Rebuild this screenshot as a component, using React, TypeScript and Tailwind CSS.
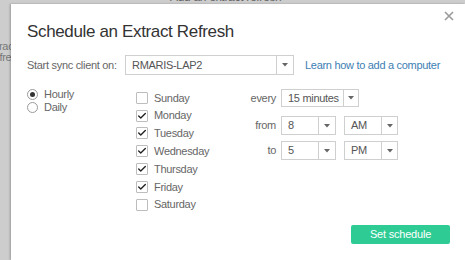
import { Check } from "lucide-react";

const days = [
  { name: "Sunday", on: false },
  { name: "Monday", on: true },
  { name: "Tuesday", on: true },
  { name: "Wednesday", on: true },
  { name: "Thursday", on: true },
  { name: "Friday", on: true },
  { name: "Saturday", on: false },
];

function Caret() {
  return (
    <svg width="6" height="4" viewBox="0 0 6 4">
      <path d="M0 0 L6 0 L3 3.5 Z" fill="#666" />
    </svg>
  );
}

function Select({ value, width, arrow = 16, height = 19 }: { value: string; width: number; arrow?: number; height?: number }) {
  return (
    <div
      className="flex border border-[#cfcfcf] bg-white text-[#555]"
      style={{ width, height }}
    >
      <div className="flex-1 flex items-center pl-[6px] leading-none">{value}</div>
      <div
        className="flex items-center justify-center border-l border-[#cfcfcf]"
        style={{ width: arrow }}
      >
        <Caret />
      </div>
    </div>
  );
}

function Radio({ label, on }: { label: string; on: boolean }) {
  return (
    <div className="flex items-center h-[13px]">
      <div className="w-[11px] h-[11px] rounded-full border border-[#9a9a9a] bg-white flex items-center justify-center">
        {on && <div className="w-[5px] h-[5px] rounded-full bg-[#333]" />}
      </div>
      <span className="ml-[6px]">{label}</span>
    </div>
  );
}

export default function App() {
  return (
    <div
      className="relative w-[465px] h-[260px] overflow-hidden bg-[#cdcdcd] text-[11px] tracking-[-0.3px]"
      style={{ fontFamily: '"Liberation Sans", Arial, sans-serif' }}
    >
      {/* page behind the modal */}
      <span className="absolute left-[170px] top-[-12px] text-[12px] text-[#666]">Add an extract refresh</span>
      <span className="absolute left-[-16px] top-[38px] text-[#777]">Extract</span>
      <span className="absolute left-[-14px] top-[49px] text-[#777]">Refresh</span>

      <div className="absolute left-[11px] top-[4px] right-0 bottom-0 bg-white shadow-[-1px_0_2px_rgba(0,0,0,0.25)] flex flex-col pl-[16px] text-[#666]">
        <button className="absolute right-[11px] top-[7px] text-[#9a9a9a]">
          <svg width="10" height="10" viewBox="0 0 10 10">
            <path d="M1 1 L9 9 M9 1 L1 9" stroke="#9a9a9a" strokeWidth="1.6" />
          </svg>
        </button>

        <h1 className="mt-[18px] h-[20px] leading-[20px] text-[17px] text-[#333] tracking-[-0.35px]">
          Schedule an Extract Refresh
        </h1>

        <div className="mt-[13px] flex items-center h-[20px]">
          <span className="w-[98px]">Start sync client on:</span>
          <Select value="RMARIS-LAP2" width={169} arrow={17} height={20} />
          <a className="ml-[11px] text-[#3d7eb3]">Learn how to add a computer</a>
        </div>

        <div className="mt-[13px] flex items-start">
          <div className="w-[109px] flex flex-col">
            <Radio label="Hourly" on />
            <Radio label="Daily" on={false} />
          </div>

          <div className="w-[109px] flex flex-col pt-[1px]">
            {days.map((d) => (
              <div key={d.name} className="flex items-center h-[17.8px]">
                <div className="w-[12px] h-[12px] border border-[#bdbdbd] rounded-[1px] bg-white flex items-center justify-center">
                  {d.on && <Check size={10} strokeWidth={3.2} color="#222" />}
                </div>
                <span className="ml-[6px]">{d.name}</span>
              </div>
            ))}
          </div>

          <div className="flex flex-col pt-[1px]">
            <div className="flex items-center">
              <span className="w-[31px] text-right">every</span>
              <div className="ml-[5px]">
                <Select value="15 minutes" width={78} arrow={15} height={18} />
              </div>
            </div>
            <div className="mt-[9px] flex items-center">
              <span className="w-[31px] text-right">from</span>
              <div className="ml-[5px] flex gap-[8px]">
                <Select value="8" width={55} arrow={17} />
                <Select value="AM" width={54} />
              </div>
            </div>
            <div className="mt-[6px] flex items-center">
              <span className="w-[31px] text-right">to</span>
              <div className="ml-[5px] flex gap-[8px]">
                <Select value="5" width={55} arrow={17} />
                <Select value="PM" width={54} />
              </div>
            </div>
          </div>
        </div>

        <div className="flex-1" />
        <div className="flex justify-end pr-[15px] pb-[16px]">
          <button className="w-[99px] h-[19px] rounded-[2px] bg-[#2ecc94] text-white text-[11px] leading-none tracking-[-0.2px]">
            Set schedule
          </button>
        </div>
      </div>
    </div>
  );
}
